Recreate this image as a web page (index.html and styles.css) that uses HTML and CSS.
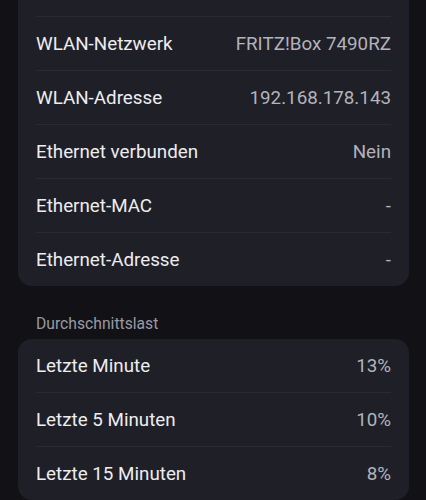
FILE: index.html
```html
<!DOCTYPE html>
<html lang="de">
<head>
<meta charset="utf-8">
<link rel="stylesheet" href="styles.css">
</head>
<body>
<main class="screen">
  <section class="card card-continued">
    <div class="row"><span class="label">WLAN-Netzwerk</span><span class="value">FRITZ!Box 7490RZ</span></div>
    <div class="row"><span class="label">WLAN-Adresse</span><span class="value">192.168.178.143</span></div>
    <div class="row"><span class="label">Ethernet verbunden</span><span class="value">Nein</span></div>
    <div class="row"><span class="label">Ethernet-MAC</span><span class="value">-</span></div>
    <div class="row"><span class="label">Ethernet-Adresse</span><span class="value">-</span></div>
  </section>
  <h2 class="section-title">Durchschnittslast</h2>
  <section class="card">
    <div class="row"><span class="label">Letzte Minute</span><span class="value">13%</span></div>
    <div class="row"><span class="label">Letzte 5 Minuten</span><span class="value">10%</span></div>
    <div class="row"><span class="label">Letzte 15 Minuten</span><span class="value">8%</span></div>
  </section>
</main>
</body>
</html>
```
FILE: styles.css
```css
html, body {
  margin: 0;
  padding: 0;
  background: #111116;
}
body {
  font-family: Roboto, "Noto Sans", sans-serif;
  -webkit-font-smoothing: antialiased;
}
.screen {
  padding: 0 17px 0 18px;
  display: flex;
  flex-direction: column;
}
.card {
  background: #1f1f27;
  border-radius: 14px;
  padding: 0 18px;
  display: flex;
  flex-direction: column;
}
.card-continued {
  border-radius: 0 0 14px 14px;
  padding-top: 16px;
}
.row {
  height: 53px;
  display: flex;
  align-items: center;
  justify-content: space-between;
  border-top: 1px solid #2a2a33;
}
.card:not(.card-continued) .row:first-child {
  border-top: none;
}
.label {
  font-size: 18.8px;
  color: #ededf0;
}
.value {
  font-size: 18.8px;
  color: #b3b3bb;
}
.section-title {
  margin: 0;
  padding: 28px 18px 5px;
  font-size: 15.7px;
  line-height: 20px;
  font-weight: 400;
  color: #9a9aa3;
}
```
